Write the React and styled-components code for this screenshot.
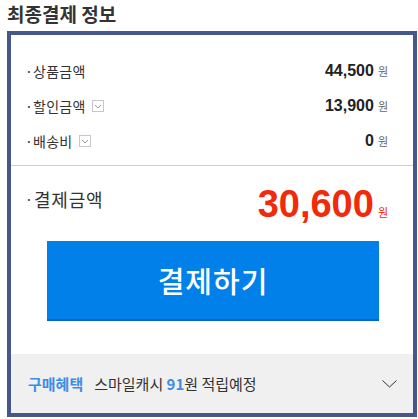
import React from 'react';
import styled, { createGlobalStyle } from 'styled-components';

const GlobalStyle = createGlobalStyle`
  html, body {
    margin: 0;
    padding: 0;
    background: #fff;
  }
  body {
    font-family: 'Noto Sans CJK KR', 'Noto Sans', sans-serif;
    color: #333;
  }
`;

const rows = [
  { label: '상품금액', value: '44,500', toggle: false },
  { label: '할인금액', value: '13,900', toggle: true },
  { label: '배송비', value: '0', toggle: true },
];

const ToggleIcon = () => (
  <ToggleBox>
    <svg width="8" height="5" viewBox="0 0 8 5">
      <path d="M1 1 L4 4 L7 1" fill="none" stroke="#999" strokeWidth="1" />
    </svg>
  </ToggleBox>
);

const App = () => {
  return (
    <>
      <GlobalStyle />
      <Wrapper>
        <Title>최종결제 정보</Title>
        <Box>
          <RowList>
            {rows.map((row) => (
              <Row key={row.label}>
                <Label>
                  <Dot>·</Dot>
                  {row.label}
                  {row.toggle && <ToggleIcon />}
                </Label>
                <Price>
                  <Amount>{row.value}</Amount>
                  <Won>원</Won>
                </Price>
              </Row>
            ))}
          </RowList>

          <TotalRow>
            <TotalLabel>
              <Dot $wide>·</Dot>결제금액
            </TotalLabel>
            <Price>
              <TotalAmount>30,600</TotalAmount>
              <Won $red>원</Won>
            </Price>
          </TotalRow>

          <PayButton type="button">결제하기</PayButton>

          <Benefit>
            <BenefitText>
              <BenefitTitle>구매혜택</BenefitTitle>
              스마일캐시 <Point>91</Point>원 적립예정
            </BenefitText>
            <svg width="15" height="8" viewBox="0 0 15 8">
              <path d="M0.5 0.5 L7.5 7 L14.5 0.5" fill="none" stroke="#333" strokeWidth="1" />
            </svg>
          </Benefit>
        </Box>
      </Wrapper>
    </>
  );
};

export default App;

// ───────────── Styled Components ─────────────

const Wrapper = styled.div`
  width: 418px;
  padding-left: 7px;
  box-sizing: border-box;
`;

const Title = styled.h2`
  margin: 0 0 4px;
  font-size: 19px;
  line-height: 27px;
  font-weight: 700;
  color: #333;
`;

const Box = styled.div`
  width: 410px;
  height: 386px;
  box-sizing: border-box;
  border: 4px solid #44598a;
  display: flex;
  flex-direction: column;
`;

const RowList = styled.div`
  padding: 18px 25px 7px 14px;
  border-bottom: 1px solid #ccd0d8;
`;

const Row = styled.div`
  display: flex;
  align-items: center;
  justify-content: space-between;
  height: 35px;
`;

const Label = styled.span`
  display: flex;
  align-items: center;
  font-size: 14px;
  letter-spacing: 0.3px;
  color: #333;
`;

const Dot = styled.span`
  display: inline-block;
  width: ${(p) => (p.$wide ? '9px' : '8px')};
  font-size: 14px;
`;

const ToggleBox = styled.span`
  display: inline-flex;
  align-items: center;
  justify-content: center;
  width: 12px;
  height: 12px;
  box-sizing: border-box;
  border: 1px solid #c8c8c8;
  margin-left: 6px;
  margin-top: 1px;
`;

const Price = styled.span`
  display: flex;
  align-items: baseline;
`;

const Amount = styled.span`
  font-family: 'Liberation Sans', Arial, sans-serif;
  font-weight: 700;
  font-size: 16px;
  color: #222;
`;

const Won = styled.span`
  font-size: 11px;
  margin-left: 4px;
  color: ${(p) => (p.$red ? '#f02a0a' : '#666')};
`;

const TotalRow = styled.div`
  display: flex;
  justify-content: space-between;
  align-items: flex-start;
  padding: 18px 25px 0 14px;
  height: 57px;
  box-sizing: border-box;
`;

const TotalLabel = styled.span`
  display: flex;
  align-items: center;
  font-size: 18px;
  letter-spacing: 0.8px;
  line-height: 30px;
  color: #333;
`;

const TotalAmount = styled.span`
  font-family: 'Liberation Sans', Arial, sans-serif;
  font-weight: 700;
  font-size: 38px;
  line-height: 40px;
  color: #f02a0a;
`;

const PayButton = styled.button`
  display: block;
  width: 332px;
  height: 80px;
  margin: 18px auto 0 36px;
  border: none;
  border-bottom: 2px solid #0066cc;
  background: #0080e8;
  color: #fff;
  font-family: 'Noto Sans CJK KR', sans-serif;
  font-size: 29px;
  letter-spacing: 1px;
  font-weight: 500;
  cursor: pointer;
`;

const Benefit = styled.div`
  margin-top: auto;
  height: 59px;
  background: #f0f0f0;
  display: flex;
  align-items: center;
  justify-content: space-between;
  padding: 0 16px 0 17px;
`;

const BenefitText = styled.span`
  font-size: 15px;
  color: #333;
`;

const BenefitTitle = styled.span`
  color: #3d8de6;
  font-weight: 700;
  margin-right: 11px;
`;

const Point = styled.span`
  color: #3d8de6;
  font-weight: 700;
`;
